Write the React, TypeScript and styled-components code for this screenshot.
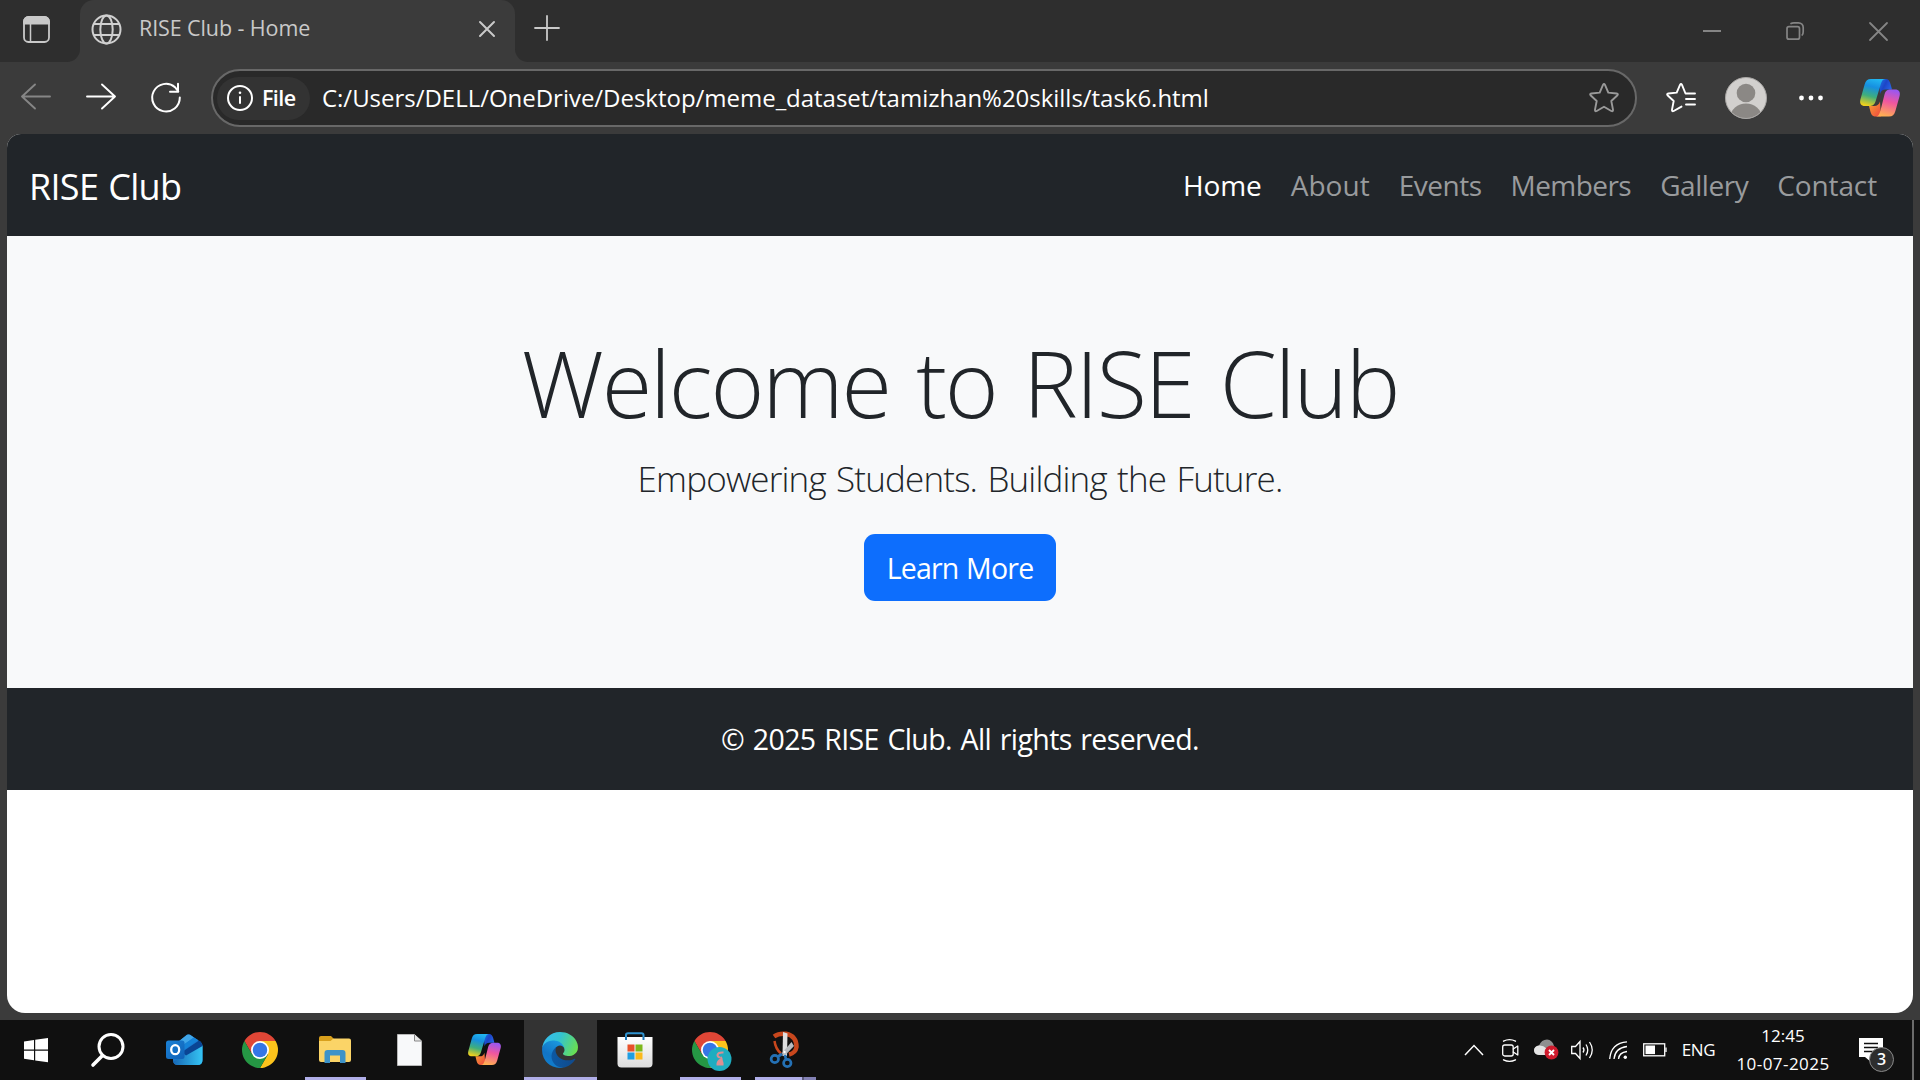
import React from 'react';
import styled, { createGlobalStyle } from 'styled-components';

const GlobalStyle = createGlobalStyle`
  * { box-sizing: border-box; }
  body { margin: 0; background: #3b3b3b; overflow: hidden; }
  svg { display: block; flex: none; overflow: visible; }
`;

const Screen = styled.div`
  width: 1920px;
  height: 1080px;
  display: flex;
  flex-direction: column;
  background: #3b3b3b;
  font-family: 'Open Sans', 'Noto Sans', sans-serif;
  white-space: nowrap;
`;

/* ---------- title bar ---------- */
const TitleBar = styled.div`
  display: flex;
  height: 62px;
`;
const TabActions = styled.div`
  width: 80px;
  padding: 16px 0 0 23px;
  background: #2e2e2e;
  border-bottom-right-radius: 13px;
`;
const TabWell = styled.div`
  width: 435px;
  background: #2e2e2e;
`;
const Tab = styled.div`
  display: flex;
  align-items: center;
  height: 62px;
  padding: 0 20px 4px 11px;
  background: #3b3b3b;
  border-radius: 14px 14px 0 0;
`;
const TabTitle = styled.span`
  flex: 1;
  margin-left: 17px;
  padding-bottom: 2px;
  color: #c9c9c9;
  font-size: 21.5px;
  line-height: 30px;
  letter-spacing: -0.1px;
`;
const StripRest = styled.div`
  flex: 1;
  display: flex;
  justify-content: space-between;
  align-items: center;
  padding-left: 19px;
  background: #2e2e2e;
  border-bottom-left-radius: 13px;
`;
const NewTab = styled.div`
  padding-bottom: 6px;
`;
const WindowControls = styled.div`
  display: flex;
`;
const WindowControl = styled.div`
  width: 83px;
  display: flex;
  justify-content: center;
`;

/* ---------- toolbar ---------- */
const Toolbar = styled.div`
  display: flex;
  align-items: center;
  height: 72px;
  padding: 0 3px;
`;
const ToolSlot = styled.div<{ $width?: number }>`
  width: ${p => p.$width ?? 65}px;
  display: flex;
  justify-content: center;
`;
const AddressBar = styled.div`
  flex: 1;
  display: flex;
  align-items: center;
  height: 58px;
  margin: 0 11px 0 13px;
  padding: 0 16px 0 4px;
  background: #292929;
  border: 2px solid #686868;
  border-radius: 29px;
`;
const SchemeChip = styled.div`
  display: flex;
  align-items: center;
  width: 93px;
  height: 43px;
  padding-left: 10px;
  gap: 9px;
  background: #333333;
  border-radius: 22px;
  color: #fff;
  font-size: 21.5px;
  font-weight: 600;
  letter-spacing: -0.6px;
  line-height: 30px;
`;
const Url = styled.span`
  flex: 1;
  padding: 0 0 1px 12px;
  color: #fff;
  font-size: 24px;
  line-height: 32px;
  letter-spacing: -0.025px;
`;

/* ---------- page ---------- */
const Page = styled.div`
  height: 879px;
  margin: 0 7px;
  background: #fff;
  border-radius: 14px 14px 18px 18px;
  overflow: hidden;
  color: #212529;
`;
const Navbar = styled.nav`
  display: flex;
  align-items: center;
  justify-content: space-between;
  height: 102px;
  padding: 0 36px 0 22px;
  background: #212529;
`;
const Brand = styled.span`
  padding-top: 4px;
  color: #fff;
  font-size: 36px;
  letter-spacing: -0.7px;
  word-spacing: 1.3px;
  line-height: 54px;
`;
const NavLinks = styled.div`
  display: flex;
  gap: 29px;
`;
const NavLink = styled.a<{ $active?: boolean; $spacing: number }>`
  color: ${p => (p.$active ? '#fff' : '#999b9d')};
  font-size: 28px;
  line-height: 44px;
  letter-spacing: ${p => p.$spacing}px;
`;
const Hero = styled.section`
  display: flex;
  flex-direction: column;
  align-items: center;
  height: 452px;
  padding-top: 92px;
  background: #f8f9fa;
`;
const Heading = styled.h1`
  margin: 0;
  font-size: 92px;
  font-weight: 300;
  line-height: 110px;
  letter-spacing: -2.1px;
  word-spacing: 4.5px;
`;
const Lead = styled.p`
  margin: 16px 0 30px;
  font-size: 35px;
  font-weight: 300;
  line-height: 50px;
  letter-spacing: -0.83px;
  word-spacing: 2px;
`;
const LearnMore = styled.a`
  width: 192px;
  height: 67px;
  padding-top: 1px;
  background: #0d6efd;
  border-radius: 11px;
  color: #fff;
  font-size: 28.5px;
  line-height: 67px;
  letter-spacing: -0.8px;
  word-spacing: 1px;
  text-align: center;
`;
const Footer = styled.footer`
  height: 102px;
  background: #212529;
  color: #fff;
  font-size: 28.5px;
  line-height: 102px;
  letter-spacing: -0.6px;
  word-spacing: 1.8px;
  text-align: center;
`;

/* ---------- taskbar ---------- */
const Taskbar = styled.div`
  display: flex;
  height: 60px;
  margin-top: 7px;
  background: #101010;
  color: #fff;
`;
const SystemButton = styled.div`
  display: flex;
  align-items: center;
  justify-content: center;
  width: 72px;
`;
const Apps = styled.div`
  flex: 1;
  display: flex;
  gap: 2px;
  margin-left: 5px;
`;
const AppTile = styled.div<{ $active?: boolean }>`
  display: flex;
  flex-direction: column;
  align-items: center;
  width: 73px;
  background: ${p => (p.$active ? '#333333' : 'transparent')};
`;
const AppIcon = styled.div`
  flex: 1;
  display: flex;
  align-items: center;
  padding-right: 1.5px;
`;
const Underline = styled.div<{ $state: 'none' | 'open' | 'active' | 'stacked' }>`
  width: ${p => (p.$state === 'active' || p.$state === 'stacked' ? 73 : 61)}px;
  height: 3px;
  margin-top: -3px;
  background: ${p =>
    p.$state === 'none'
      ? 'transparent'
      : p.$state === 'stacked'
        ? 'linear-gradient(90deg, transparent 6px, #b0aee8 6px, #b0aee8 53px, #5d5c7c 53px, #5d5c7c 55px, #8381b4 55px, #8381b4 67px, transparent 67px)'
        : '#b0aee8'};
`;
const Tray = styled.div`
  display: flex;
  align-items: center;
`;
const TraySlot = styled.div<{ $width?: number }>`
  display: flex;
  justify-content: center;
  width: ${p => p.$width ?? 36.2}px;
`;
const Language = styled(TraySlot)`
  font-size: 17px;
  letter-spacing: -0.4px;
  line-height: 24px;
`;
const Clock = styled.div`
  display: flex;
  flex-direction: column;
  align-items: center;
  width: 118px;
  font-size: 17px;
  line-height: 28px;
`;
const DateText = styled.span`
  letter-spacing: 0.45px;
`;
const Notifications = styled.div`
  position: relative;
  display: flex;
  justify-content: center;
  width: 60px;
  padding-right: 3px;
`;
const Badge = styled.span`
  position: absolute;
  left: 27px;
  top: 9px;
  width: 25px;
  height: 25px;
  border: 1px solid #8a8a8a;
  border-radius: 50%;
  background: #2d2d2d;
  font-size: 16px;
  font-weight: 600;
  line-height: 22px;
  text-align: center;
`;
const ShowDesktop = styled.div`
  width: 8px;
  height: 60px;
  margin-left: 10px;
  border-left: 2px solid #6b6b6b;
`;

/* ---------- drawings ---------- */
const line = { fill: 'none', strokeLinecap: 'round', strokeLinejoin: 'round' } as const;

const TabActionsIcon = () => (
  <svg width="27" height="27" {...line} stroke="#c9c9c9" strokeWidth="1.8">
    <path d="M1 7.5V5.5A4.5 4.5 0 0 1 5.5 1H21.500A4.500 4.500 0 0 1 26 5.500V7.500Z" fill="#c9c9c9" />
    <rect x="1" y="1" width="25" height="25" rx="4.500" />
    <path d="M7.500 7.500V26" strokeWidth="1.500" />
  </svg>
);
const GlobeIcon = () => (
  <svg width="31" height="31" {...line} stroke="#d0d0d0" strokeWidth="2">
    <circle cx="15.500" cy="15.500" r="14" />
    <ellipse cx="15.500" cy="15.500" rx="6.200" ry="14" />
    <path d="M3 10H28M3 21H28" />
  </svg>
);
const Cross = ({ size, color, width }: { size: number; color: string; width: number }) => (
  <svg width={size} height={size} {...line} stroke={color} strokeWidth={width}>
    <path d={`M1 1L${size - 1} ${size - 1}M${size - 1} 1L1 ${size - 1}`} />
  </svg>
);
const PlusIcon = () => (
  <svg width="26" height="26" {...line} stroke="#c9c9c9" strokeWidth="1.800">
    <path d="M13 1V25M1 13H25" />
  </svg>
);
const MinimizeIcon = () => (
  <svg width="20" height="18"><path d="M0 9H18" stroke="#858585" strokeWidth="2" /></svg>
);
const RestoreIcon = () => (
  <svg width="20" height="18" {...line} stroke="#858585" strokeWidth="1.700">
    <rect x="1" y="4.700" width="12.500" height="12.500" rx="2" />
    <path d="M5 1.500Q6 .8 8 .8H12.500A4.700 4.700 0 0 1 17.200 5.500V9.500Q17.200 12 16.200 13" />
  </svg>
);
const ArrowIcon = ({ back }: { back?: boolean }) => (
  <svg width="30" height="30" {...line} stroke={back ? '#868686' : '#fff'} strokeWidth="1.900">
    <path d={back ? 'M29 13.500H1M14 1.500L1 13.500L14 25.500' : 'M1 13.500H29M16 1.500L29 13.500L16 25.500'} />
  </svg>
);
const ReloadIcon = () => (
  <svg width="30" height="30" {...line} stroke="#fff" strokeWidth="2">
    <path d="M28.800 14.500A13.800 13.800 0 1 1 24 4.200L27.300 8.500" />
    <path d="M27 .8V8.800H19" />
  </svg>
);
const InfoIcon = () => (
  <svg width="26" height="26" {...line} stroke="#fff" strokeWidth="2">
    <circle cx="13" cy="13" r="12" />
    <path d="M13 12V18" /><circle cx="13" cy="7.800" r="1.300" fill="#fff" stroke="none" />
  </svg>
);
const StarIcon = () => (
  <svg width="30" height="30" {...line} stroke="#9a9a9a" strokeWidth="1.900">
    <path d="M14 1.900Q15 0 16 1.900L19.300 9.600L27.600 10.500Q29.800 10.900 28.200 12.500L22.300 18L24 26.600Q24.200 28.900 22.300 28L15 23.800L7.700 28Q5.800 28.900 6 26.600L7.700 18L1.800 12.500Q.2 10.900 2.400 10.500L10.700 9.600Z" />
  </svg>
);
const FavoritesIcon = () => (
  <svg width="30" height="30" {...line} stroke="#fff" strokeWidth="1.900">
    <path d="M29 10.500H19.500L16 1.900Q15 0 14 1.900L10.700 9.600L2.400 10.500Q.2 10.900 1.800 12.500L7.700 18L6 26.600Q5.800 28.900 7.700 28L15.500 23.600M20 16H29M20 21.500H29" />
  </svg>
);
const AvatarIcon = () => (
  <svg width="42" height="42">
    <defs><clipPath id="avatar"><circle cx="21" cy="21" r="20" /></clipPath></defs>
    <circle cx="21" cy="21" r="20.500" fill="#d2d0ce" stroke="#aaa8a6" />
    <circle cx="21" cy="16" r="9.300" fill="#8b8885" />
    <ellipse cx="21" cy="40" rx="15.500" ry="13.500" fill="#8b8885" clipPath="url(#avatar)" />
  </svg>
);
const DotsIcon = () => (
  <svg width="24" height="6" fill="#fff">
    <circle cx="2.500" cy="3" r="2.400" /><circle cx="12" cy="3" r="2.400" /><circle cx="21.500" cy="3" r="2.400" />
  </svg>
);
const CopilotIcon = ({ size, id }: { size: number; id: string }) => (
  <svg width={size} height={size * 0.94} viewBox="0 0 40 37.600">
    <defs>
      <linearGradient id={`${id}a`} x1=".6" y1="0" x2=".35" y2="1">
        <stop offset="0" stopColor="#21b5f0" /><stop offset=".3" stopColor="#168fe0" />
        <stop offset=".65" stopColor="#3fae7c" /><stop offset="1" stopColor="#eed01d" />
      </linearGradient>
      <linearGradient id={`${id}b`} x1="0" y1="0" x2="1" y2=".6">
        <stop offset="0" stopColor="#1a7be8" /><stop offset=".5" stopColor="#1d45c8" /><stop offset="1" stopColor="#2867e8" />
      </linearGradient>
      <linearGradient id={`${id}c`} x1=".65" y1="0" x2=".4" y2="1">
        <stop offset="0" stopColor="#9a57f0" /><stop offset=".45" stopColor="#f0569f" /><stop offset="1" stopColor="#ffb052" />
      </linearGradient>
      <linearGradient id={`${id}d`} x1="0" y1="0" x2="1" y2="1">
        <stop offset="0" stopColor="#f9a532" /><stop offset="1" stopColor="#ee4540" />
      </linearGradient>
    </defs>
    <path d="M19 0H25.500C28.500 0 29.700 2 30.500 5L32 10.600H26C22.500 10.600 21 12 20 15Z" fill={`url(#${id}b)`} />
    <path d="M21 37.600H16C12.500 37.600 11.200 35.600 10.400 32.600L9 27H14C17.500 27 19 25.600 20 22.600Z" fill={`url(#${id}d)`} />
    <path d="M11 0H25.500C22.500 0 21.500 3 20.500 6L15.700 22C14.500 25.800 12.500 27 9 27H5C1 27-.6 24.500 .4 20.500L4.600 5.500C5.700 1.800 7.500 0 11 0Z" fill={`url(#${id}a)`} />
    <path d="M29 37.600H16C18.500 37.600 19.500 34.600 20.500 31.600L24.500 15.600C25.500 11.800 27.500 10.600 31 10.600H35C39 10.600 40.600 13.100 39.600 17.100L35.400 32.100C34.300 35.800 32.500 37.600 29 37.600Z" fill={`url(#${id}c)`} />
  </svg>
);
const WindowsIcon = () => (
  <svg width="24" height="24" fill="#fff">
    <path d="M0 3.400L10 2V11.500H0ZM11.200 1.800L24 0V11.500H11.200ZM0 12.700H10V22.200L0 20.800ZM11.200 12.700H24V24.200L11.200 22.400Z" />
  </svg>
);
const SearchIcon = () => (
  <svg width="35" height="34" fill="none" stroke="#fff" strokeWidth="3" strokeLinecap="round">
    <circle cx="20" cy="13.500" r="12" /><path d="M11.500 22.500L2 32" strokeWidth="3.600" />
  </svg>
);
const OutlookIcon = () => (
  <svg width="37" height="32">
    <defs>
      <linearGradient id="ol1" x1="0" y1="0" x2="1" y2="0"><stop offset="0" stopColor="#1767b5" /><stop offset="1" stopColor="#35c5f4" /></linearGradient>
      <linearGradient id="ol2" x1="0" y1="0" x2="1" y2="1"><stop offset="0" stopColor="#1b82d6" /><stop offset="1" stopColor="#1061b6" /></linearGradient>
    </defs>
    <path d="M7 12L21 .8Q22.500 0 24 .8L34 7.500Q36.500 9 36.500 12V26Q36.500 31 31.500 31H12Q7 31 7 26Z" fill="#1a7ad0" />
    <path d="M7 12L21 .8Q22.500 0 24 .8L28 3.500L10 16Z" fill="#40a6e8" />
    <path d="M10 16L28 3.500L32 6L14 19Z" fill="#1583d8" />
    <path d="M36.500 11.500V26Q36.500 31 31.500 31H12Q8 31 7 27.500Z" fill="url(#ol1)" />
    <path d="M16 18L33 6.500Q36.500 8.500 36.500 12L20 21.500Z" fill="#0a4594" />
    <rect x="0" y="6.500" width="18.500" height="18.500" rx="2.500" fill="url(#ol2)" />
    <ellipse cx="9.200" cy="15.700" rx="4" ry="4.500" fill="none" stroke="#fff" strokeWidth="2.300" />
  </svg>
);
const ChromeIcon = () => (
  <svg width="36" height="36" viewBox="0 0 48 48">
    <path d="M24 12H44.780A24 24 0 0 0 3.220 12L13.610 30Z" fill="#df4636" />
    <path d="M44.780 12H24L34.390 30L24 48A24 24 0 0 0 44.780 12Z" fill="#fcc31c" />
    <path d="M34.390 30L13.610 30L3.220 12A24 24 0 0 0 24 48Z" fill="#259744" />
    <circle cx="24" cy="24" r="12" fill="#fff" /><circle cx="24" cy="24" r="9.700" fill="#3576e6" />
  </svg>
);
const ChromeProfileIcon = () => (
  <svg width="36" height="36">
    <ChromeIcon />
    <circle cx="27.500" cy="27" r="12" fill="#1fadc0" />
    <path d="M31.500 20.500Q26 20 25.500 23Q25.500 25 28 25.500M28.500 25Q30.500 27 29 29.500" fill="none" stroke="#dc8f92" strokeWidth="2" />
    <path d="M27.500 27Q24 29 24.500 33.500H31.500Q32 29 29.500 27Z" fill="#dc8f92" />
  </svg>
);
const ExplorerIcon = () => (
  <svg width="32" height="28">
    <path d="M0 4V2Q0 0 2 0H12L15 3V8H0Z" fill="#d9a01c" />
    <path d="M0 5H11.500L14.500 2.500H30Q32 2.500 32 4.500V24Q32 26 30 26H2Q0 26 0 24Z" fill="#fbd467" />
    <path d="M5.500 27V17Q5.500 14 8.500 14H23.500Q26.500 14 26.500 17V27H21V19.500H11V27Z" fill="#3e93c8" />
  </svg>
);
const FileIcon = () => (
  <svg width="25" height="32">
    <path d="M.5 .5H17.500L24.500 7V31.500H.5Z" fill="#f8f9fa" stroke="#b8b8b8" />
    <path d="M17.500 .5V7H24.500" fill="#e8e8e8" stroke="#888" />
  </svg>
);
const EdgeIcon = () => (
  <svg width="36" height="36" viewBox="0 0 256 256">
    <defs>
      <linearGradient id="e1" x1="0" y1="0" x2="1" y2="0"><stop offset="0" stopColor="#0c59a4" /><stop offset="1" stopColor="#114a8b" /></linearGradient>
      <linearGradient id="e2" x1=".7" y1="0" x2=".2" y2="1"><stop offset="0" stopColor="#1b9de2" /><stop offset=".6" stopColor="#1274c5" /><stop offset="1" stopColor="#0f82d0" /></linearGradient>
      <linearGradient id="e3" x1="0" y1=".3" x2="1" y2=".6"><stop offset="0" stopColor="#35bdf0" /><stop offset=".45" stopColor="#34c3cf" /><stop offset="1" stopColor="#6adf50" /></linearGradient>
    </defs>
    <path d="M231 190.500c-3.400 1.800-6.900 3.400-10.500 4.700a101.500 101.500 0 0 1-35.900 6.500c-47.300 0-88.500-32.500-88.500-74.300a31.500 31.500 0 0 1 16.400-27.300c-42.800 1.800-53.800 46.400-53.800 72.500 0 74 68.100 81.400 82.800 81.400 7.900 0 19.800-2.300 27-4.600l1.300-.4a128.300 128.300 0 0 0 66.600-52.800 4 4 0 0 0-5.400-5.700Z" fill="url(#e1)" />
    <path d="M105.700 241.400A79.200 79.200 0 0 1 83 220.100a80.700 80.700 0 0 1 29.500-120c3.200-1.500 8.500-4.100 15.600-4a32.400 32.400 0 0 1 25.700 13 31.900 31.900 0 0 1 6.300 18.700c0-.2 24.500-79.600-80-79.600-43.900 0-80 41.600-80 78.200a130.200 130.200 0 0 0 12.100 56 128 128 0 0 0 156.400 67 75.500 75.500 0 0 1-62.800-8Z" fill="url(#e2)" />
    <path d="M152.300 148.900c-.9 1-3.400 2.500-3.400 5.600 0 2.600 1.700 5.200 4.800 7.300 14.300 10 41.400 8.600 41.500 8.600a59.600 59.600 0 0 0 30.300-8.300 61.400 61.400 0 0 0 30.400-52.900c.3-22.400-8-37.300-11.300-43.900C223.500 23.900 177.700 0 128 0A128 128 0 0 0 0 126.200c.5-36.500 36.800-66 80-66 3.500 0 23.500.3 42 10a72.600 72.600 0 0 1 30.900 29.300c6.100 10.600 7.200 24.100 7.200 29.500s-2.700 13.300-7.800 19.900Z" fill="url(#e3)" />
  </svg>
);
const StoreIcon = () => (
  <svg width="36" height="36">
    <defs><linearGradient id="bag" x1="0" y1="0" x2="0" y2="1"><stop offset="0" stopColor="#fff" /><stop offset="1" stopColor="#dcdcdc" /></linearGradient></defs>
    <path d="M9 7V3Q9 1.200 11 1.200H24.500Q26.500 1.200 26.500 3V7" fill="none" stroke="#2f93d0" strokeWidth="2" />
    <path d="M.5 5H35.500V31.500Q35.500 35.500 31.500 35.500H4.500Q.5 35.500 .5 31.500Z" fill="url(#bag)" />
    <path d="M9 5V8M26.500 5V8" stroke="#1b76b8" strokeWidth="2" />
    <rect x="10.500" y="12.500" width="7" height="7" fill="#e8512a" /><rect x="18.500" y="12.500" width="7" height="7" fill="#7db81c" />
    <rect x="10.500" y="20.500" width="7" height="7" fill="#1f9ee2" /><rect x="18.500" y="20.500" width="7" height="7" fill="#fab91c" />
  </svg>
);
const SnipIcon = () => (
  <svg width="30" height="36">
    <path d="M4 4.500Q9 1 16 1.800Q26.500 4 26.500 15Q25.500 21 19 22.500" fill="none" stroke="#c8471d" strokeWidth="4.500" />
    <path d="M4.500 9Q5.500 17 11 21.500" fill="none" stroke="#c8471d" strokeWidth="2.500" />
    <path d="M13 0L17.500 1.500L17 24H12.500Z" fill="#dededf" />
    <path d="M21.500 10L24 14L14 24.500L12 21Z" fill="#b9bcc0" />
    <g fill="none" stroke="#2471b5" strokeWidth="2.700">
      <circle cx="4.800" cy="27" r="3.700" /><circle cx="17.300" cy="31" r="3.700" />
      <path d="M8 24.500L12 22M15 23L16 27.500" />
    </g>
    <circle cx="14.500" cy="20" r="1.200" fill="#fff" />
  </svg>
);
const ChevronIcon = () => (
  <svg width="20" height="12" fill="none" stroke="#fff" strokeWidth="1.500"><path d="M1 11L10 1.500L19 11" /></svg>
);
const CameraIcon = () => (
  <svg width="17" height="23" {...line} stroke="#fff" strokeWidth="1.300">
    <rect x=".7" y="6" width="10.500" height="11" rx="2" />
    <path d="M11.200 10L15.800 7V16L11.200 13M1.500 2.200Q7.500-.8 13.500 2.200M1.500 20.800Q7.500 23.800 13.500 20.800" />
  </svg>
);
const CloudIcon = () => (
  <svg width="25" height="22">
    <path d="M7 16H5Q0 15.500 0 11Q.5 7 5 6.500Q7.500 .5 13 .5Q18.500 1 20 7L22 14Z" fill="#8f8f8f" />
    <path d="M5 6.500Q9 6 12.500 9.500L15 16H5Q0 15.500 0 11Q.5 7 5 6.500Z" fill="#e4e4e4" />
    <circle cx="17.500" cy="13.500" r="6.900" fill="#cf1b2d" />
    <path d="M15 11L20 16M20 11L15 16" stroke="#fff" strokeWidth="1.900" />
  </svg>
);
const SpeakerIcon = () => (
  <svg width="23" height="20" fill="none" stroke="#fff" strokeWidth="1.300">
    <path d="M.7 6.500H4.500L9 1.500V18.500L4.500 13.500H.7Z" />
    <path d="M12 7.500Q14 10 12 12.500M15 4.500Q18.500 10 15 15.500" /><path d="M18.500 2Q24 10 18.500 18" />
  </svg>
);
const WifiIcon = () => (
  <svg width="19" height="19" fill="none" stroke="#fff" strokeWidth="1.300">
    <path d="M.7 18Q2 2 18 .8M5 18Q6 7 18 5.500M9.500 18Q10 11.500 18 10.500" />
    <circle cx="16.300" cy="16.300" r="1.700" fill="#fff" stroke="none" />
  </svg>
);
const BatteryIcon = () => (
  <svg width="24" height="14" fill="none" stroke="#fff" strokeWidth="1.300">
    <rect x=".7" y=".8" width="21" height="12" /><rect x="2.500" y="2.500" width="9.500" height="8.600" fill="#fff" stroke="none" />
    <path d="M23 4.500V9" />
  </svg>
);
const MessageIcon = () => (
  <svg width="24" height="24">
    <path d="M0 0H24V19H13L12 24L6 19H0Z" fill="#fff" />
    <path d="M5 5.500H19M5 9.500H19M5 13.500H19" stroke="#101010" strokeWidth="1.300" />
  </svg>
);

const links = [
  { label: 'Home', spacing: -0.15, active: true },
  { label: 'About', spacing: 0.05 },
  { label: 'Events', spacing: -0.5 },
  { label: 'Members', spacing: -0.55 },
  { label: 'Gallery', spacing: -0.45 },
  { label: 'Contact', spacing: -0.12 },
];

type AppEntry = { name: string; icon: React.ReactNode; state: 'none' | 'open' | 'active' | 'stacked' };
const apps: AppEntry[] = [
  { name: 'outlook', icon: <OutlookIcon />, state: 'none' },
  { name: 'chrome', icon: <ChromeIcon />, state: 'none' },
  { name: 'explorer', icon: <ExplorerIcon />, state: 'open' },
  { name: 'file', icon: <FileIcon />, state: 'none' },
  { name: 'copilot', icon: <CopilotIcon size={33} id="cpb" />, state: 'none' },
  { name: 'edge', icon: <EdgeIcon />, state: 'active' },
  { name: 'store', icon: <StoreIcon />, state: 'none' },
  { name: 'chrome-profile', icon: <ChromeProfileIcon />, state: 'open' },
  { name: 'snip', icon: <SnipIcon />, state: 'stacked' },
];

export default function App() {
  return (
    <Screen>
      <GlobalStyle />
      <TitleBar>
        <TabActions><TabActionsIcon /></TabActions>
        <TabWell>
          <Tab>
            <GlobeIcon />
            <TabTitle>RISE Club - Home</TabTitle>
            <Cross size={16} color="#c9c9c9" width={2} />
          </Tab>
        </TabWell>
        <StripRest>
          <NewTab><PlusIcon /></NewTab>
          <WindowControls>
            <WindowControl><MinimizeIcon /></WindowControl>
            <WindowControl><RestoreIcon /></WindowControl>
            <WindowControl><Cross size={19} color="#858585" width={1.8} /></WindowControl>
          </WindowControls>
        </StripRest>
      </TitleBar>
      <Toolbar>
        <ToolSlot><ArrowIcon back /></ToolSlot>
        <ToolSlot><ArrowIcon /></ToolSlot>
        <ToolSlot><ReloadIcon /></ToolSlot>
        <AddressBar>
          <SchemeChip><InfoIcon />File</SchemeChip>
          <Url>C:/Users/DELL/OneDrive/Desktop/meme_dataset/tamizhan%20skills/task6.html</Url>
          <StarIcon />
        </AddressBar>
        <ToolSlot><FavoritesIcon /></ToolSlot>
        <ToolSlot><AvatarIcon /></ToolSlot>
        <ToolSlot><DotsIcon /></ToolSlot>
        <ToolSlot $width={74}><CopilotIcon size={40} id="cpa" /></ToolSlot>
      </Toolbar>
      <Page>
        <Navbar>
          <Brand>RISE Club</Brand>
          <NavLinks>
            {links.map(l => (
              <NavLink key={l.label} $active={l.active} $spacing={l.spacing}>{l.label}</NavLink>
            ))}
          </NavLinks>
        </Navbar>
        <Hero>
          <Heading>Welcome to RISE Club</Heading>
          <Lead>Empowering Students. Building the Future.</Lead>
          <LearnMore>Learn More</LearnMore>
        </Hero>
        <Footer>© 2025 RISE Club. All rights reserved.</Footer>
      </Page>
      <Taskbar>
        <SystemButton><WindowsIcon /></SystemButton>
        <SystemButton><SearchIcon /></SystemButton>
        <Apps>
          {apps.map(a => (
            <AppTile key={a.name} $active={a.state === 'active'}>
              <AppIcon>{a.icon}</AppIcon>
              <Underline $state={a.state} />
            </AppTile>
          ))}
        </Apps>
        <Tray>
          <TraySlot><ChevronIcon /></TraySlot>
          <TraySlot><CameraIcon /></TraySlot>
          <TraySlot><CloudIcon /></TraySlot>
          <TraySlot><SpeakerIcon /></TraySlot>
          <TraySlot><WifiIcon /></TraySlot>
          <TraySlot><BatteryIcon /></TraySlot>
          <Language $width={51}>ENG</Language>
          <Clock>
            <span>12:45</span>
            <DateText>10-07-2025</DateText>
          </Clock>
          <Notifications>
            <MessageIcon />
            <Badge>3</Badge>
          </Notifications>
          <ShowDesktop />
        </Tray>
      </Taskbar>
    </Screen>
  );
}
